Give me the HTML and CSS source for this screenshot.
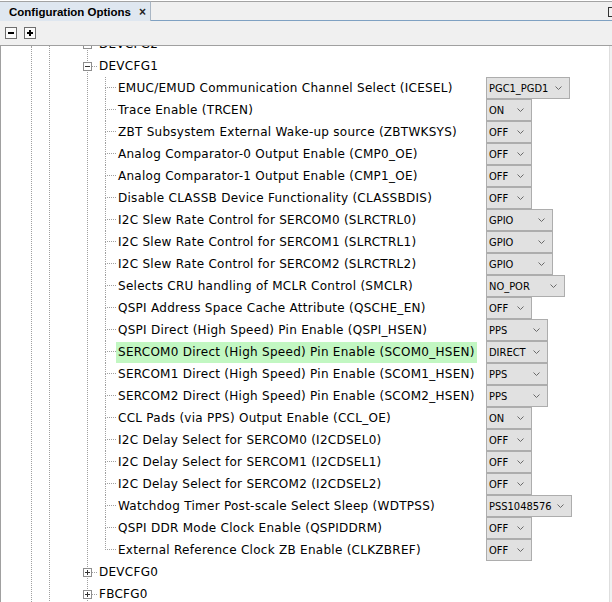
FILE: index.html
```html
<!DOCTYPE html>
<html>
<head>
<meta charset="utf-8">
<link rel="stylesheet" href="styles.css">
</head>
<body>
<div class="panel">
  <div class="tabbar">
    <div class="tab"><span class="tab-title">Configuration Options</span><span class="tab-close">×</span></div>
    <div class="tabfill"><span class="winbtn"></span></div>
  </div>
  <div class="toolbar">
    <span class="tbtn"><svg width="10" height="10" viewBox="0 0 10 10"><rect x="2" y="4" width="6" height="2" fill="#000"/></svg></span>
    <span class="tbtn"><svg width="10" height="10" viewBox="0 0 10 10"><rect x="2" y="4" width="6" height="2" fill="#000"/><rect x="4" y="2" width="2" height="6" fill="#000"/></svg></span>
  </div>
  <div class="treewrap">
    <div class="tree">
      <div class="guide g1"><div class="guide g2"><div class="guide g3">
        <div class="nodes">
          <div class="node"><span class="exp"><svg width="7" height="7" viewBox="0 0 7 7"><rect x="1" y="3" width="5" height="1" fill="#333"/></svg></span><span class="hl"></span><span class="lbl">DEVCFG2</span></div>
          <div class="node"><span class="exp"><svg width="7" height="7" viewBox="0 0 7 7"><rect x="1" y="3" width="5" height="1" fill="#333"/></svg></span><span class="hl"></span><span class="lbl">DEVCFG1</span></div>
          <div class="kids">
            <div class="leaf"><span class="conn"><span class="ct"></span><span class="cb"></span></span><span class="lcell"><span class="lbl">EMUC/EMUD Communication Channel Select (ICESEL)</span></span><span class="dd w84"><span>PGC1_PGD1</span><svg width="7" height="5" viewBox="0 0 7 5"><polyline points="0.5,0.5 3.5,3.5 6.5,0.5" fill="none" stroke="#6a6a6a" stroke-width="1"/></svg></span></div>
            <div class="leaf"><span class="conn"><span class="ct"></span><span class="cb"></span></span><span class="lcell"><span class="lbl">Trace Enable (TRCEN)</span></span><span class="dd w46"><span>ON</span><svg width="7" height="5" viewBox="0 0 7 5"><polyline points="0.5,0.5 3.5,3.5 6.5,0.5" fill="none" stroke="#6a6a6a" stroke-width="1"/></svg></span></div>
            <div class="leaf"><span class="conn"><span class="ct"></span><span class="cb"></span></span><span class="lcell"><span class="lbl">ZBT Subsystem External Wake-up source (ZBTWKSYS)</span></span><span class="dd w46"><span>OFF</span><svg width="7" height="5" viewBox="0 0 7 5"><polyline points="0.5,0.5 3.5,3.5 6.5,0.5" fill="none" stroke="#6a6a6a" stroke-width="1"/></svg></span></div>
            <div class="leaf"><span class="conn"><span class="ct"></span><span class="cb"></span></span><span class="lcell"><span class="lbl">Analog Comparator-0 Output Enable (CMP0_OE)</span></span><span class="dd w46"><span>OFF</span><svg width="7" height="5" viewBox="0 0 7 5"><polyline points="0.5,0.5 3.5,3.5 6.5,0.5" fill="none" stroke="#6a6a6a" stroke-width="1"/></svg></span></div>
            <div class="leaf"><span class="conn"><span class="ct"></span><span class="cb"></span></span><span class="lcell"><span class="lbl">Analog Comparator-1 Output Enable (CMP1_OE)</span></span><span class="dd w46"><span>OFF</span><svg width="7" height="5" viewBox="0 0 7 5"><polyline points="0.5,0.5 3.5,3.5 6.5,0.5" fill="none" stroke="#6a6a6a" stroke-width="1"/></svg></span></div>
            <div class="leaf"><span class="conn"><span class="ct"></span><span class="cb"></span></span><span class="lcell"><span class="lbl">Disable CLASSB Device Functionality (CLASSBDIS)</span></span><span class="dd w46"><span>OFF</span><svg width="7" height="5" viewBox="0 0 7 5"><polyline points="0.5,0.5 3.5,3.5 6.5,0.5" fill="none" stroke="#6a6a6a" stroke-width="1"/></svg></span></div>
            <div class="leaf"><span class="conn"><span class="ct"></span><span class="cb"></span></span><span class="lcell"><span class="lbl">I2C Slew Rate Control for SERCOM0 (SLRCTRL0)</span></span><span class="dd w67"><span>GPIO</span><svg width="7" height="5" viewBox="0 0 7 5"><polyline points="0.5,0.5 3.5,3.5 6.5,0.5" fill="none" stroke="#6a6a6a" stroke-width="1"/></svg></span></div>
            <div class="leaf"><span class="conn"><span class="ct"></span><span class="cb"></span></span><span class="lcell"><span class="lbl">I2C Slew Rate Control for SERCOM1 (SLRCTRL1)</span></span><span class="dd w67"><span>GPIO</span><svg width="7" height="5" viewBox="0 0 7 5"><polyline points="0.5,0.5 3.5,3.5 6.5,0.5" fill="none" stroke="#6a6a6a" stroke-width="1"/></svg></span></div>
            <div class="leaf"><span class="conn"><span class="ct"></span><span class="cb"></span></span><span class="lcell"><span class="lbl">I2C Slew Rate Control for SERCOM2 (SLRCTRL2)</span></span><span class="dd w67"><span>GPIO</span><svg width="7" height="5" viewBox="0 0 7 5"><polyline points="0.5,0.5 3.5,3.5 6.5,0.5" fill="none" stroke="#6a6a6a" stroke-width="1"/></svg></span></div>
            <div class="leaf"><span class="conn"><span class="ct"></span><span class="cb"></span></span><span class="lcell"><span class="lbl">Selects CRU handling of MCLR Control (SMCLR)</span></span><span class="dd w79"><span>NO_POR</span><svg width="7" height="5" viewBox="0 0 7 5"><polyline points="0.5,0.5 3.5,3.5 6.5,0.5" fill="none" stroke="#6a6a6a" stroke-width="1"/></svg></span></div>
            <div class="leaf"><span class="conn"><span class="ct"></span><span class="cb"></span></span><span class="lcell"><span class="lbl">QSPI Address Space Cache Attribute (QSCHE_EN)</span></span><span class="dd w46"><span>OFF</span><svg width="7" height="5" viewBox="0 0 7 5"><polyline points="0.5,0.5 3.5,3.5 6.5,0.5" fill="none" stroke="#6a6a6a" stroke-width="1"/></svg></span></div>
            <div class="leaf"><span class="conn"><span class="ct"></span><span class="cb"></span></span><span class="lcell"><span class="lbl">QSPI Direct (High Speed) Pin Enable (QSPI_HSEN)</span></span><span class="dd w62"><span>PPS</span><svg width="7" height="5" viewBox="0 0 7 5"><polyline points="0.5,0.5 3.5,3.5 6.5,0.5" fill="none" stroke="#6a6a6a" stroke-width="1"/></svg></span></div>
            <div class="leaf"><span class="conn"><span class="ct"></span><span class="cb"></span></span><span class="lcell"><span class="lbl hi">SERCOM0 Direct (High Speed) Pin Enable (SCOM0_HSEN)</span></span><span class="dd w62"><span>DIRECT</span><svg width="7" height="5" viewBox="0 0 7 5"><polyline points="0.5,0.5 3.5,3.5 6.5,0.5" fill="none" stroke="#6a6a6a" stroke-width="1"/></svg></span></div>
            <div class="leaf"><span class="conn"><span class="ct"></span><span class="cb"></span></span><span class="lcell"><span class="lbl">SERCOM1 Direct (High Speed) Pin Enable (SCOM1_HSEN)</span></span><span class="dd w62"><span>PPS</span><svg width="7" height="5" viewBox="0 0 7 5"><polyline points="0.5,0.5 3.5,3.5 6.5,0.5" fill="none" stroke="#6a6a6a" stroke-width="1"/></svg></span></div>
            <div class="leaf"><span class="conn"><span class="ct"></span><span class="cb"></span></span><span class="lcell"><span class="lbl">SERCOM2 Direct (High Speed) Pin Enable (SCOM2_HSEN)</span></span><span class="dd w62"><span>PPS</span><svg width="7" height="5" viewBox="0 0 7 5"><polyline points="0.5,0.5 3.5,3.5 6.5,0.5" fill="none" stroke="#6a6a6a" stroke-width="1"/></svg></span></div>
            <div class="leaf"><span class="conn"><span class="ct"></span><span class="cb"></span></span><span class="lcell"><span class="lbl">CCL Pads (via PPS) Output Enable (CCL_OE)</span></span><span class="dd w46"><span>ON</span><svg width="7" height="5" viewBox="0 0 7 5"><polyline points="0.5,0.5 3.5,3.5 6.5,0.5" fill="none" stroke="#6a6a6a" stroke-width="1"/></svg></span></div>
            <div class="leaf"><span class="conn"><span class="ct"></span><span class="cb"></span></span><span class="lcell"><span class="lbl">I2C Delay Select for SERCOM0 (I2CDSEL0)</span></span><span class="dd w46"><span>OFF</span><svg width="7" height="5" viewBox="0 0 7 5"><polyline points="0.5,0.5 3.5,3.5 6.5,0.5" fill="none" stroke="#6a6a6a" stroke-width="1"/></svg></span></div>
            <div class="leaf"><span class="conn"><span class="ct"></span><span class="cb"></span></span><span class="lcell"><span class="lbl">I2C Delay Select for SERCOM1 (I2CDSEL1)</span></span><span class="dd w46"><span>OFF</span><svg width="7" height="5" viewBox="0 0 7 5"><polyline points="0.5,0.5 3.5,3.5 6.5,0.5" fill="none" stroke="#6a6a6a" stroke-width="1"/></svg></span></div>
            <div class="leaf"><span class="conn"><span class="ct"></span><span class="cb"></span></span><span class="lcell"><span class="lbl">I2C Delay Select for SERCOM2 (I2CDSEL2)</span></span><span class="dd w46"><span>OFF</span><svg width="7" height="5" viewBox="0 0 7 5"><polyline points="0.5,0.5 3.5,3.5 6.5,0.5" fill="none" stroke="#6a6a6a" stroke-width="1"/></svg></span></div>
            <div class="leaf"><span class="conn"><span class="ct"></span><span class="cb"></span></span><span class="lcell"><span class="lbl">Watchdog Timer Post-scale Select Sleep (WDTPSS)</span></span><span class="dd w86"><span>PSS1048576</span><svg width="7" height="5" viewBox="0 0 7 5"><polyline points="0.5,0.5 3.5,3.5 6.5,0.5" fill="none" stroke="#6a6a6a" stroke-width="1"/></svg></span></div>
            <div class="leaf"><span class="conn"><span class="ct"></span><span class="cb"></span></span><span class="lcell"><span class="lbl">QSPI DDR Mode Clock Enable (QSPIDDRM)</span></span><span class="dd w46"><span>OFF</span><svg width="7" height="5" viewBox="0 0 7 5"><polyline points="0.5,0.5 3.5,3.5 6.5,0.5" fill="none" stroke="#6a6a6a" stroke-width="1"/></svg></span></div>
            <div class="leaf last"><span class="conn"><span class="ct"></span><span class="cb"></span></span><span class="lcell"><span class="lbl">External Reference Clock ZB Enable (CLKZBREF)</span></span><span class="dd w46"><span>OFF</span><svg width="7" height="5" viewBox="0 0 7 5"><polyline points="0.5,0.5 3.5,3.5 6.5,0.5" fill="none" stroke="#6a6a6a" stroke-width="1"/></svg></span></div>
          </div>
          <div class="node"><span class="exp"><svg width="7" height="7" viewBox="0 0 7 7"><rect x="1" y="3" width="5" height="1" fill="#333"/><rect x="3" y="1" width="1" height="5" fill="#333"/></svg></span><span class="hl"></span><span class="lbl">DEVCFG0</span></div>
          <div class="node"><span class="exp"><svg width="7" height="7" viewBox="0 0 7 7"><rect x="1" y="3" width="5" height="1" fill="#333"/><rect x="3" y="1" width="1" height="5" fill="#333"/></svg></span><span class="hl"></span><span class="lbl">FBCFG0</span></div>
        </div>
      </div></div></div>
    </div>
    <div class="vscroll"></div>
  </div>
</div>
</body>
</html>
```
FILE: styles.css
```css
html, body {
  margin: 0;
  padding: 0;
  background: #ffffff;
}
.panel {
  width: 612px;
  height: 602px;
  display: flex;
  flex-direction: column;
  overflow: hidden;
  font-family: "DejaVu Sans", sans-serif;
}
.tabbar {
  height: 21px;
  box-sizing: border-box;
  padding-top: 1px;
  display: flex;
  flex-shrink: 0;
}
.tab {
  width: 151px;
  flex-shrink: 0;
  box-sizing: border-box;
  border-top: 1px solid #a3a3a3;
  border-right: 1px solid #a9b6c4;
  background: #dfe7f0;
  display: flex;
  align-items: center;
  padding-left: 9px;
  white-space: nowrap;
}
.tab-title {
  font-family: "Liberation Sans", Arial, sans-serif;
  font-weight: bold;
  font-size: 11.5px;
  color: #000;
  white-space: nowrap;
}
.tab-close {
  font-family: "Liberation Sans", Arial, sans-serif;
  font-weight: bold;
  font-size: 12px;
  margin-left: 8px;
  color: #222;
}
.tabfill {
  flex: 1;
  box-sizing: border-box;
  border-top: 1px solid #a3a3a3;
  border-bottom: 1px solid #7fa1c2;
  background: #f0f0f0;
  display: flex;
  justify-content: flex-end;
  align-items: flex-start;
}
.winbtn {
  width: 3px;
  height: 8px;
  margin-top: 5px;
  border: 1px solid #333;
  border-right: none;
}
.toolbar {
  height: 25px;
  box-sizing: border-box;
  border-bottom: 1px solid #a0a0a0;
  background: #f0f0f0;
  display: flex;
  align-items: flex-start;
  padding: 6px 0 0 5px;
  gap: 7px;
  flex-shrink: 0;
}
.tbtn {
  width: 12px;
  height: 12px;
  box-sizing: border-box;
  border: 1px solid #6e6e6e;
  background: #fbfbfb;
  display: flex;
  align-items: center;
  justify-content: center;
}
.treewrap {
  flex: 1;
  display: flex;
  overflow: hidden;
  border-left: 1px solid #a0a0a0;
  background: #fff;
}
.tree {
  flex: 1;
  display: flex;
  overflow: hidden;
}
.guide {
  display: flex;
  flex-direction: column;
  border-left: 1px dotted #a0a0a0;
}
.g1 { margin-left: 30px; }
.g2 { margin-left: 17px; }
.g3 { margin-left: 37px; display: block; flex: 1; }
.nodes {
  margin-top: -13px;
}
.node {
  height: 22px;
  display: flex;
  align-items: center;
}
.exp {
  width: 9px;
  height: 9px;
  box-sizing: border-box;
  margin-left: -5px;
  border: 1px solid #8e8e8e;
  background: #fff;
  display: flex;
  align-items: center;
  justify-content: center;
}
.exp svg { display: block; }
.hl {
  width: 5px;
  height: 0;
  border-top: 1px dotted #a0a0a0;
}
.lbl {
  font-size: 12px;
  letter-spacing: 0.27px;
  color: #000;
  padding: 0 2px;
  height: 21px;
  line-height: 21px;
  white-space: nowrap;
}
.lbl.hi {
  background: #c2f7c2;
}
.kids {
  margin-left: 17px;
}
.leaf {
  height: 22px;
  display: flex;
}
.conn {
  width: 11px;
  display: flex;
  flex-direction: column;
  flex-shrink: 0;
}
.ct {
  height: 11px;
  box-sizing: border-box;
  border-left: 1px dotted #a0a0a0;
  border-bottom: 1px dotted #a0a0a0;
}
.cb {
  flex: 1;
  border-left: 1px dotted #a0a0a0;
}
.leaf.last .cb {
  border-left: none;
}
.lcell {
  width: 370px;
  flex-shrink: 0;
  display: flex;
  align-items: center;
}
.dd {
  height: 22px;
  box-sizing: border-box;
  border: 1px solid #adadad;
  background: #e1e1e1;
  display: flex;
  align-items: center;
  justify-content: space-between;
  padding: 0 7px 0 2px;
  font-family: "DejaVu Sans Condensed", "DejaVu Sans", sans-serif;
  font-size: 11px;
  color: #000;
  white-space: nowrap;
}
.dd svg { display: block; flex-shrink: 0; }
.w46 { width: 46px; }
.w62 { width: 62px; }
.w67 { width: 67px; }
.w79 { width: 79px; }
.w84 { width: 84px; }
.w86 { width: 86px; }
.vscroll {
  width: 2px;
  border-left: 1px solid #dedede;
  background: #f0f0f0;
  flex-shrink: 0;
}
```
